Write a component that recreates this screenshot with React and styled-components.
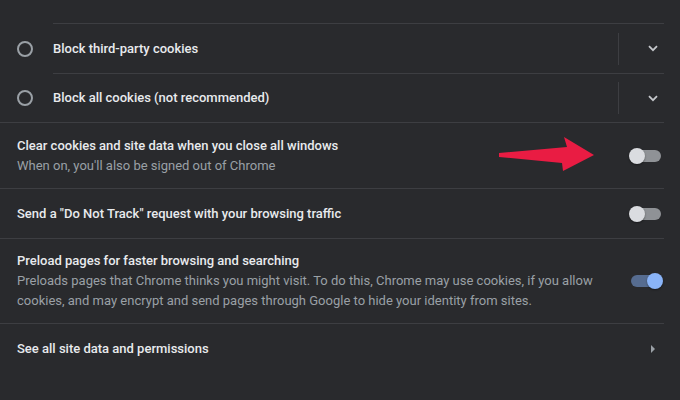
import React from "react";
import styled, { createGlobalStyle } from "styled-components";

const GlobalStyle = createGlobalStyle`
	html, body {
		margin: 0;
		padding: 0;
		background: #292a2d;
	}
	body {
		font-family: Roboto, "Liberation Sans", sans-serif;
		font-size: 13px;
		color: #e8eaed;
		-webkit-font-smoothing: antialiased;
	}
`;

const Page = styled.div`
	width: 680px;
	height: 400px;
	overflow: hidden;
	background: #292a2d;
`;

const Card = styled.div`
	position: relative;
	width: 664px;
`;

const Spacer = styled.div`
	height: 23px;
`;

const RadioRow = styled.div`
	display: flex;
	align-items: stretch;
	height: 50px;

	& + & {
		height: 49px;
	}
`;

const RadioCell = styled.div`
	width: 53px;
	display: flex;
	align-items: center;
	padding-left: 17px;
	box-sizing: border-box;
`;

const RadioCircle = styled.span`
	width: 16px;
	height: 16px;
	box-sizing: border-box;
	border: 2px solid #9aa0a6;
	border-radius: 50%;
	margin-top: 1px;
`;

const RadioBody = styled.div`
	flex: 1;
	display: flex;
	align-items: center;
	border-top: 1px solid #3d3e42;
`;

const Label = styled.div`
	flex: 1;
	line-height: 20px;
	font-weight: 500;
	color: #e8eaed;
`;

const Sub = styled.div`
	line-height: 20px;
	color: #9aa0a6;
`;

const Separator = styled.span`
	width: 1px;
	height: 32px;
	background: #3d3e42;
	margin-right: 23px;
`;

const IconBox = styled.span`
	width: ${p => p.$w || 22}px;
	display: flex;
	align-items: center;
	justify-content: center;
	color: #c4c7cb;
`;

const Row = styled.div`
	display: flex;
	align-items: center;
	min-height: ${p => p.$tall ? 66 : 50}px;
	box-sizing: border-box;
	padding: 12px 3px 12px 17px;
	border-top: 1px solid #3d3e42;
`;

const Text = styled.div`
	flex: 1;
	padding-right: 20px;
`;

const Track = styled.span`
	position: relative;
	width: 30px;
	height: 12px;
	border-radius: 6px;
	background: ${p => p.$on ? "#566c90" : "#8f9296"};
	flex-shrink: 0;
`;

const Knob = styled.span`
	position: absolute;
	top: -2px;
	left: ${p => p.$on ? 16 : -2}px;
	width: 16px;
	height: 16px;
	border-radius: 50%;
	background: ${p => p.$on ? "#8ab4f8" : "#dadce0"};
	box-shadow: 0 1px 2px rgba(0, 0, 0, 0.4);
`;

const Pointer = styled.svg`
	position: absolute;
	left: 495px;
	top: 133px;
`;

const Toggle = ({ on }) => (
	<Track $on={on}>
		<Knob $on={on} />
	</Track>
);

const Chevron = () => (
	<svg width="10" height="7" viewBox="0 0 10 7">
		<path d="M1 1.2 L5 5.2 L9 1.2" fill="none" stroke="currentColor" strokeWidth="1.8" />
	</svg>
);

const Caret = () => (
	<svg width="6" height="10" viewBox="0 0 6 10">
		<path d="M1 1 L5 5 L1 9 Z" fill="#9aa0a6" />
	</svg>
);

const radios = ["Block third-party cookies", "Block all cookies (not recommended)"];

export default function App() {
	return (
		<Page>
			<GlobalStyle />
			<Card>
				<Spacer />
				{radios.map(label => (
					<RadioRow key={label}>
						<RadioCell>
							<RadioCircle />
						</RadioCell>
						<RadioBody>
							<Label>{label}</Label>
							<Separator />
							<IconBox>
								<Chevron />
							</IconBox>
						</RadioBody>
					</RadioRow>
				))}

				<Row $tall>
					<Text>
						<Label>Clear cookies and site data when you close all windows</Label>
						<Sub>When on, you'll also be signed out of Chrome</Sub>
					</Text>
					<Toggle />
				</Row>

				<Row>
					<Text>
						<Label>Send a "Do Not Track" request with your browsing traffic</Label>
					</Text>
					<Toggle />
				</Row>

				<Row>
					<Text>
						<Label>Preload pages for faster browsing and searching</Label>
						<Sub>
							Preloads pages that Chrome thinks you might visit. To do this, Chrome may use cookies, if you allow
							cookies, and may encrypt and send pages through Google to hide your identity from sites.
						</Sub>
					</Text>
					<Toggle on />
				</Row>

				<Row>
					<Text>
						<Label>See all site data and permissions</Label>
					</Text>
					<IconBox $w={16}>
						<Caret />
					</IconBox>
				</Row>

				<Pointer width="105" height="42" viewBox="0 0 105 42">
					<polygon points="4,20 72,14 69,4 99,22 68,38 67,30 4,24" fill="#e91c43" />
				</Pointer>
			</Card>
		</Page>
	);
}
